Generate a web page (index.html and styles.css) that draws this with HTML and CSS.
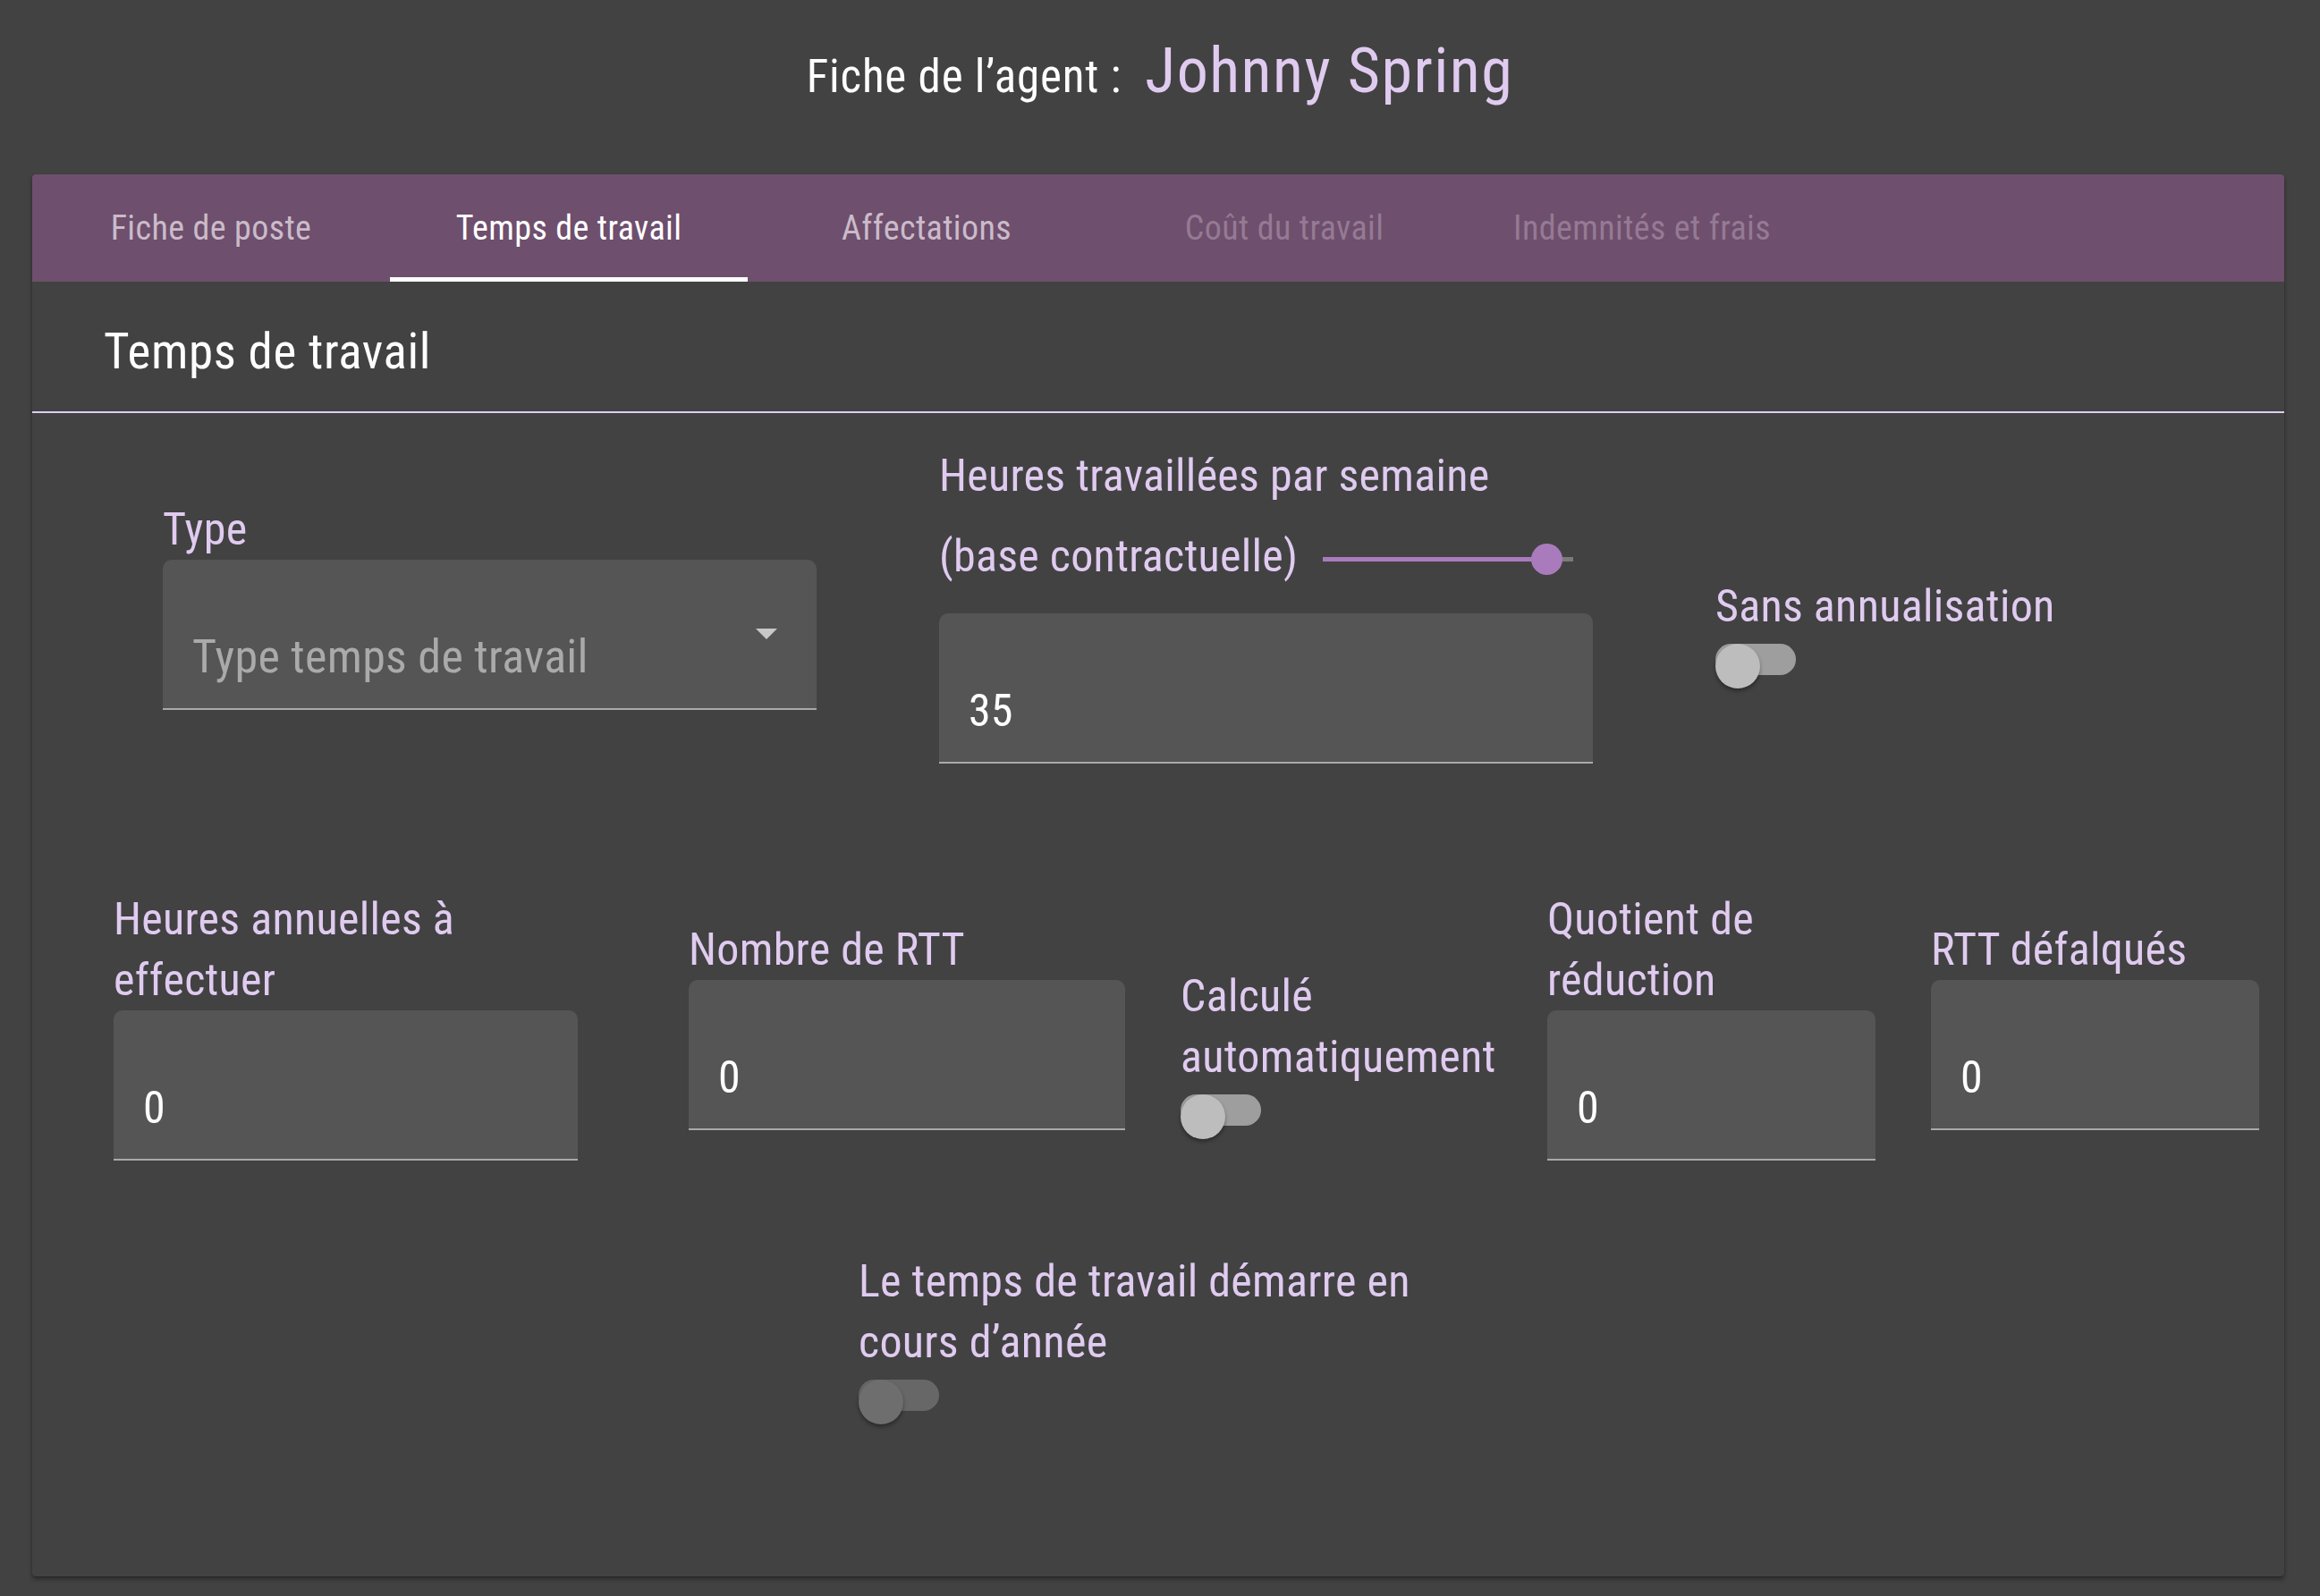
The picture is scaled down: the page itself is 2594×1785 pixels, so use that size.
FILE: index.html
```html
<!DOCTYPE html>
<html lang="fr">
<head>
<meta charset="utf-8">
<title>Fiche de l’agent</title>
<link rel="stylesheet" href="styles.css">
</head>
<body>
<header class="page-header">
  <h1 class="title"><span class="title-prefix">Fiche de l’agent :</span><span class="title-name">Johnny Spring</span></h1>
</header>
<main class="card">
  <nav class="tabs">
    <div class="tab">Fiche de poste</div>
    <div class="tab tab-active">Temps de travail</div>
    <div class="tab">Affectations</div>
    <div class="tab tab-disabled">Coût du travail</div>
    <div class="tab tab-disabled">Indemnités et frais</div>
  </nav>
  <h2 class="section-title">Temps de travail</h2>
  <section class="form">
    <div class="row row-1">
      <div class="field w-wide">
        <div class="label">Type</div>
        <div class="input select"><span class="placeholder">Type temps de travail</span><span class="arrow"></span></div>
      </div>
      <div class="field w-wide">
        <div class="label">Heures travaillées par semaine<br>(base contractuelle)<span class="slider"><span class="slider-fill"></span><span class="slider-rest"></span><span class="slider-thumb"></span></span></div>
        <div class="input"><span class="value">35</span></div>
      </div>
      <div class="field toggle-field">
        <div class="label">Sans annualisation</div>
        <div class="toggle"><span class="toggle-thumb"></span></div>
      </div>
    </div>
    <div class="row row-2">
      <div class="field w-annual">
        <div class="label">Heures annuelles à<br>effectuer</div>
        <div class="input"><span class="value">0</span></div>
      </div>
      <div class="field w-rtt">
        <div class="label">Nombre de RTT</div>
        <div class="input"><span class="value">0</span></div>
      </div>
      <div class="field toggle-field w-calc">
        <div class="label">Calculé<br>automatiquement</div>
        <div class="toggle"><span class="toggle-thumb"></span></div>
      </div>
      <div class="field w-small">
        <div class="label">Quotient de<br>réduction</div>
        <div class="input"><span class="value">0</span></div>
      </div>
      <div class="field w-small">
        <div class="label">RTT défalqués</div>
        <div class="input"><span class="value">0</span></div>
      </div>
    </div>
    <div class="row row-3">
      <div class="field toggle-field w-start">
        <div class="label">Le temps de travail démarre en<br>cours d’année</div>
        <div class="toggle toggle-disabled"><span class="toggle-thumb"></span></div>
      </div>
    </div>
  </section>
</main>
</body>
</html>
```
FILE: styles.css
```css
* { box-sizing: border-box; }

html, body { margin: 0; }

body {
  background: #424242;
  color: #ffffff;
  font-family: "Roboto Condensed", "Liberation Sans", Arial, sans-serif;
  min-height: 1785px;
}

.page-header {
  padding: 38px 0 75px;
  text-align: center;
}

.title {
  margin: 0;
  font-size: 70px;
  line-height: 82px;
  font-weight: normal;
  white-space: nowrap;
}

.title-prefix {
  font-size: 51px;
  line-height: 1;
  letter-spacing: 0.8px;
  color: #ffffff;
}

.title-name {
  font-size: 70px;
  line-height: 1;
  letter-spacing: 1.5px;
  color: #e0cbf0;
  margin-left: 26px;
}

.card {
  margin: 0 40px 0 36px;
  background: #424242;
  border-radius: 4px;
  box-shadow: 0 4px 5px rgba(0, 0, 0, 0.28), 0 1px 3px rgba(0, 0, 0, 0.2);
  padding-bottom: 177px;
}

.tabs {
  display: flex;
  height: 120px;
  background: #6e4f6d;
  border-radius: 4px 4px 0 0;
}

.tab {
  width: 400px;
  display: flex;
  align-items: center;
  justify-content: center;
  font-size: 38px;
  letter-spacing: 0.4px;
  color: #cbbbca;
}

.tab-active {
  color: #ffffff;
  box-shadow: inset 0 -5px 0 #ffffff;
}

.tab-disabled {
  color: #957a94;
}

.section-title {
  margin: 46px 0 0;
  padding: 0 0 35px 80px;
  font-size: 55px;
  line-height: 64px;
  letter-spacing: 0.6px;
  font-weight: normal;
  border-bottom: 2px solid #e0cbf0;
}

.row {
  display: flex;
  align-items: center;
}

.row-1 {
  margin-top: 36px;
  padding-left: 146px;
  gap: 137px;
}

.row-2 {
  margin-top: 140px;
  padding-left: 91px;
  gap: 62px;
}

.row-3 {
  margin-top: 47px;
  justify-content: center;
}

.w-wide { width: 731px; }
.w-annual { width: 519px; margin-right: 62px; }
.w-rtt { width: 488px; }
.w-calc { width: 348px; }
.w-small { width: 367px; }
.w-start { width: 670px; }

.label {
  font-size: 50px;
  line-height: 68px;
  letter-spacing: 0.3px;
  color: #e0cbf0;
  white-space: nowrap;
}

.input {
  height: 168px;
  background: #555555;
  border-bottom: 2px solid #a9a9a9;
  border-radius: 10px 10px 0 0;
  padding: 75px 33px 0;
  font-size: 50px;
  line-height: 68px;
  color: #ffffff;
}

.select {
  display: flex;
  justify-content: space-between;
  align-items: flex-start;
  padding-right: 44px;
}

.placeholder {
  font-size: 52px;
  letter-spacing: 0.3px;
  color: #aaaaaa;
}

.arrow {
  margin-top: 2px;
  width: 0;
  height: 0;
  border-left: 12px solid transparent;
  border-right: 12px solid transparent;
  border-top: 12px solid #c8c8c8;
}

.slider {
  display: inline-block;
  vertical-align: middle;
  position: relative;
  width: 280px;
  height: 120px;
  margin-left: 28px;
}

.slider-fill {
  position: absolute;
  left: 0;
  top: 57px;
  width: 251px;
  height: 5px;
  background: #a97bbd;
}

.slider-rest {
  position: absolute;
  left: 251px;
  right: 0;
  top: 57px;
  height: 5px;
  background: #7a7a7a;
}

.slider-thumb {
  position: absolute;
  left: 233px;
  top: 42px;
  width: 35px;
  height: 35px;
  border-radius: 50%;
  background: #a97bbd;
}

.toggle-field {
  padding-top: 54px;
}

.toggle {
  width: 90px;
  height: 35px;
  margin-top: 15.5px;
  margin-bottom: 7.5px;
  border-radius: 17.5px;
  background: #9e9e9e;
}

.toggle-thumb {
  display: block;
  width: 50px;
  height: 50px;
  margin-top: -7.5px;
  border-radius: 50%;
  background: #bdbdbd;
  box-shadow: 0 3px 4px rgba(0, 0, 0, 0.35);
}

.toggle-disabled {
  background: #676767;
}

.toggle-disabled .toggle-thumb {
  background: #6e6e6e;
}
```
